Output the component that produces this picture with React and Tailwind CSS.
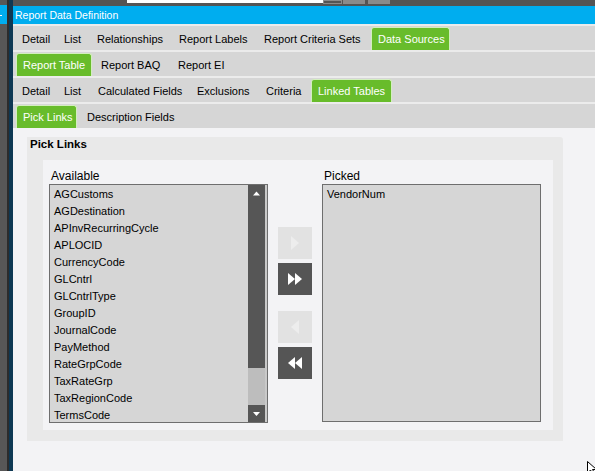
const rowOne = [
  { label: 'Detail', w: 42 },
  { label: 'List', w: 33 },
  { label: 'Relationships', w: 82 },
  { label: 'Report Labels', w: 85 },
  { label: 'Report Criteria Sets', w: 113 },
  { label: 'Data Sources', w: 79, active: true }
]

const rowTwo = [
  { label: 'Report Table', w: 76, active: true },
  { label: 'Report BAQ', w: 77, gap: 3 },
  { label: 'Report EI', w: 60 }
]

const rowThree = [
  { label: 'Detail', w: 42 },
  { label: 'List', w: 34 },
  { label: 'Calculated Fields', w: 99 },
  { label: 'Exclusions', w: 69 },
  { label: 'Criteria', w: 51 },
  { label: 'Linked Tables', w: 81, active: true }
]

const rowFour = [
  { label: 'Pick Links', w: 61, active: true },
  { label: 'Description Fields', w: 120, gap: 4 }
]

const available = [
  'AGCustoms',
  'AGDestination',
  'APInvRecurringCycle',
  'APLOCID',
  'CurrencyCode',
  'GLCntrl',
  'GLCntrlType',
  'GroupID',
  'JournalCode',
  'PayMethod',
  'RateGrpCode',
  'TaxRateGrp',
  'TaxRegionCode',
  'TermsCode'
]

const Tab = ({ label, w, gap = 0, active }) => {
  if (active) {
    return (
      <div
        style={{ width: w, marginLeft: gap }}
        className="h-[23px] mt-[1px] shrink-0 flex items-center pl-[6px] text-white bg-[#68bc2b] border border-b-0 border-[#d3eebf] rounded-t-[3px] whitespace-nowrap"
      >
        {label}
      </div>
    )
  }
  return (
    <div
      style={{ width: w, marginLeft: gap }}
      className="h-[24px] shrink-0 flex items-center pt-[3px] pl-[6px] text-black whitespace-nowrap"
    >
      {label}
    </div>
  )
}

const TabRow = ({ tabs }) => (
  <div className="h-[24px] bg-[#d6d6d6] flex pl-[3px] text-[11px]">
    {tabs.map((t) => (
      <Tab key={t.label} {...t} />
    ))}
  </div>
)

const MoveButton = ({ enabled, children }) => (
  <div className={`w-[34px] h-[32px] ${enabled ? 'bg-[#555555]' : 'bg-[#e2e2e2]'}`}>
    <svg width="34" height="32" viewBox="0 0 34 32" fill={enabled ? '#ffffff' : '#ededed'}>
      {children}
    </svg>
  </div>
)

export default function App() {
  return (
    <div className="relative w-[595px] h-[471px] overflow-hidden flex bg-[#f3f3f5] font-['Liberation_Sans',Arial,sans-serif]">
      {/* left window edge */}
      <div className="w-[7px] flex flex-col bg-[#575757]">
        <div className="h-[5px]" />
        <div className="h-[19px] bg-[#00adef] relative">
          <div className="absolute left-0 top-[10px] w-[2px] h-[1px] bg-white" />
        </div>
      </div>
      <div className="w-[6px] bg-[#0e3853] border-l-2 border-[#2c2c2c]" />

      <div className="flex-1 flex flex-col">
        {/* top strip */}
        <div className="h-[6px] bg-[#545454] relative">
          <div className="absolute left-[114px] top-0 w-[196px] h-[3px] bg-white" />
          <div className="absolute left-[310px] top-0 w-[19px] h-[4px] border border-[#8a8a8a]" />
          <div className="absolute left-[330px] top-0 w-[22px] h-[4px] bg-[#8a8a8a]" />
          <div className="absolute left-[355px] top-0 w-[22px] h-[4px] bg-[#8a8a8a]" />
        </div>

        {/* title */}
        <div className="h-[18px] bg-[#00adef] text-white text-[10.5px] leading-[18px] pl-[2px]">
          Report Data Definition
        </div>

        <div className="h-[2px] bg-[#ebebeb]" />
        <TabRow tabs={rowOne} />
        <div className="h-[2px] bg-[#ebebeb]" />
        <TabRow tabs={rowTwo} />
        <div className="h-[2px] bg-[#ececec]" />
        <TabRow tabs={rowThree} />
        <div className="h-[2px] bg-[#ececec]" />
        <TabRow tabs={rowFour} />

        {/* content */}
        <div className="flex-1 bg-[#f3f3f5] pt-[9px] pl-[14px]">
          <div className="w-[536px] h-[304px] bg-[#e9e9e9] rounded-tr-[3px] flex flex-col">
            <div className="h-[23px] pl-[3px] text-[11.5px] font-bold leading-[15px] text-black">Pick Links</div>
            <div className="ml-[16px] w-[510px] h-[270px] bg-[#f3f3f5] pt-[8px] flex">
              {/* available */}
              <div className="ml-[6px] w-[219px] flex flex-col">
                <div className="h-[16px] leading-[16px] pl-[2px] text-[12px] text-black">Available</div>
                <div className="h-[239px] border border-[#6e6e6e] bg-[#d6d6d6] flex">
                  <div className="flex-1 pt-[1px] pl-[4px] text-[11px] text-black">
                    {available.map((item) => (
                      <div key={item} className="h-[17px] leading-[17px] whitespace-nowrap">
                        {item}
                      </div>
                    ))}
                  </div>
                  <div className="w-[17px] flex flex-col">
                    <div className="h-[17px] bg-[#565656]">
                      <svg width="17" height="17" viewBox="0 0 17 17">
                        <polygon points="5,10.5 8.5,6.5 12,10.5" fill="#ffffff" />
                      </svg>
                    </div>
                    <div className="h-[166px] bg-[#565656]" />
                    <div className="flex-1 bg-[#bdbdbd]" />
                    <div className="h-[17px] bg-[#565656]">
                      <svg width="17" height="17" viewBox="0 0 17 17">
                        <polygon points="5,7 12,7 8.5,11" fill="#ffffff" />
                      </svg>
                    </div>
                  </div>
                  <div className="w-[2px] bg-[#c9c9c9]" />
                </div>
              </div>

              {/* move buttons */}
              <div className="ml-[10px] pt-[59px] flex flex-col">
                <MoveButton>
                  <polygon points="13,9 21,16 13,23" />
                </MoveButton>
                <div className="h-[4px]" />
                <MoveButton enabled>
                  <polygon points="10,10 17,16 10,22" />
                  <polygon points="17,10 24,16 17,22" />
                </MoveButton>
                <div className="h-[16px]" />
                <MoveButton>
                  <polygon points="21,9 13,16 21,23" />
                </MoveButton>
                <div className="h-[4px]" />
                <MoveButton enabled>
                  <polygon points="17,10 10,16 17,22" />
                  <polygon points="24,10 17,16 24,22" />
                </MoveButton>
              </div>

              {/* picked */}
              <div className="ml-[10px] w-[219px] flex flex-col">
                <div className="h-[16px] leading-[16px] pl-[2px] text-[12px] text-black">Picked</div>
                <div className="h-[238px] border border-[#6e6e6e] bg-[#d6d6d6] pt-[1px] pl-[4px] text-[11px] text-black">
                  <div className="h-[17px] leading-[17px]">VendorNum</div>
                </div>
              </div>
            </div>
          </div>
        </div>
      </div>

      {/* mouse pointer */}
      <svg className="absolute left-[587px] top-[461px]" width="10" height="14" viewBox="0 0 10 14">
        <polygon points="0.5,0.5 0.5,12 3.5,9 6,13.5 8,12.5 5.5,8.5 9.5,8.5" fill="#ffffff" stroke="#000000" strokeWidth="1" />
      </svg>
    </div>
  )
}
